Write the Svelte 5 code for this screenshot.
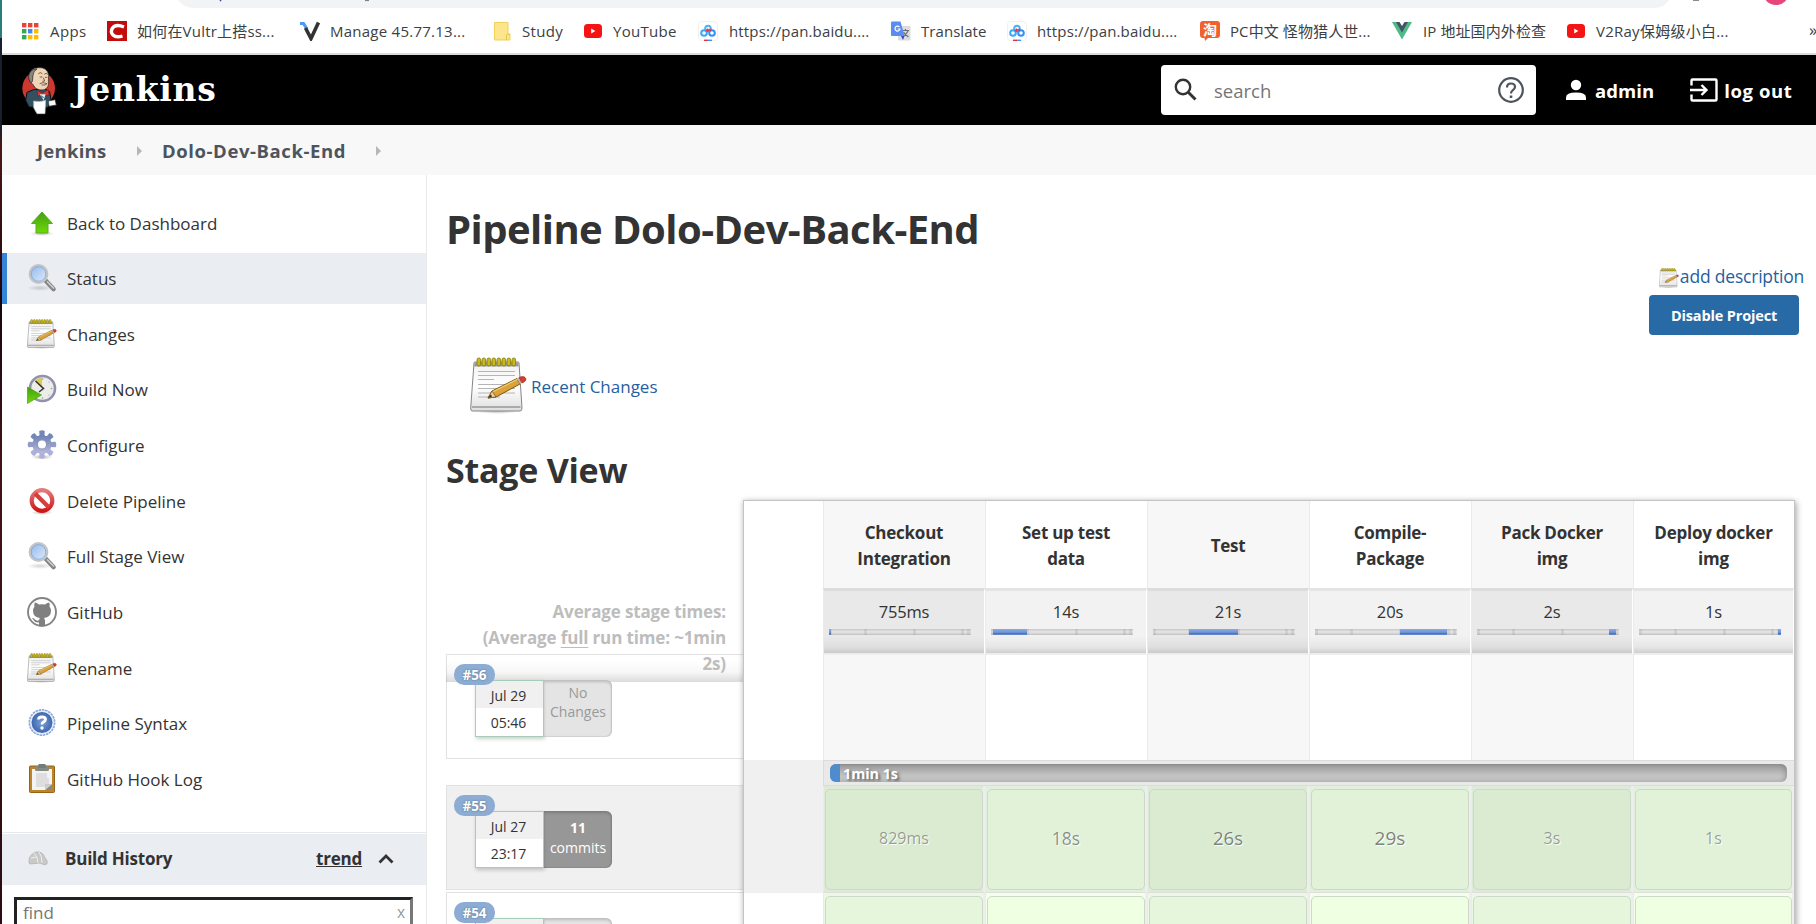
<script>
  const bookmarks = [
    { icon: 'apps', label: 'Apps', x: 20, pad: 50, ls: 0.4 },
    { icon: 'c', label: '如何在Vultr上搭ss...', x: 107, pad: 137, ls: 0.2 },
    { icon: 'v', label: 'Manage 45.77.13...', x: 300, pad: 330, ls: 0.25 },
    { icon: 'note', label: 'Study', x: 492, pad: 522, ls: 0.35 },
    { icon: 'yt', label: 'YouTube', x: 583, pad: 613, ls: 0.3 },
    { icon: 'baidu', label: 'https://pan.baidu....', x: 698, pad: 729, ls: 0.15 },
    { icon: 'tr', label: 'Translate', x: 891, pad: 921, ls: 0.05 },
    { icon: 'baidu', label: 'https://pan.baidu....', x: 1007, pad: 1037, ls: 0.15 },
    { icon: 'tao', label: 'PC中文 怪物猎人世...', x: 1200, pad: 1230, ls: 0.1 },
    { icon: 'vue', label: 'IP 地址国内外检查', x: 1392, pad: 1423, ls: 0.1 },
    { icon: 'yt', label: 'V2Ray保姆级小白...', x: 1566, pad: 1596, ls: 0.25 }
  ].map((b, i, all) => ({ ...b, width: (all[i + 1]?.x ?? 1808) - b.x, gap: b.pad - b.x - 20 }));

  const tasks = [
    ['up', 'Back to Dashboard'],
    ['search', 'Status'],
    ['notepad', 'Changes'],
    ['clock', 'Build Now'],
    ['gear', 'Configure'],
    ['stop', 'Delete Pipeline'],
    ['search', 'Full Stage View'],
    ['github', 'GitHub'],
    ['notepad', 'Rename'],
    ['help', 'Pipeline Syntax'],
    ['clipboard', 'GitHub Hook Log']
  ];

  const stages = [
    { name: ['Checkout', 'Integration'], avg: '755ms', from: 0, to: 2, run: '829ms', size: 16, tone: 0.46 },
    { name: ['Set up test', 'data'], avg: '14s', from: 2, to: 36, run: '18s', size: 17.5, tone: 0.54 },
    { name: ['Test'], avg: '21s', from: 36, to: 85, run: '26s', size: 18.5, tone: 0.6 },
    { name: ['Compile-', 'Package'], avg: '20s', from: 85, to: 132, run: '29s', size: 19, tone: 0.62 },
    { name: ['Pack Docker', 'img'], avg: '2s', from: 132, to: 139, run: '3s', size: 16, tone: 0.46 },
    { name: ['Deploy docker', 'img'], avg: '1s', from: 139, to: 142, run: '1s', size: 16, tone: 0.46 }
  ];

  const runs = [
    { id: '#56', day: 'Jul 29', time: '05:46', lines: ['No', 'Changes'], commits: false, shaded: false },
    { id: '#55', day: 'Jul 27', time: '23:17', lines: ['11', 'commits'], commits: true, shaded: true },
    { id: '#54', day: '', time: '', lines: ['', ''], commits: false, shaded: false }
  ];
</script>

<svg class="defs" width="0" height="0" aria-hidden="true">
  <defs>
    <linearGradient id="paper" x1="0" y1="0" x2="0" y2="1"><stop offset="0" stop-color="#f1f1f1" /><stop offset=".5" stop-color="#fff" /><stop offset="1" stop-color="#dedede" /></linearGradient>
    <linearGradient id="green" x1="0" y1="0" x2="0" y2="1"><stop offset="0" stop-color="#459e12" /><stop offset="1" stop-color="#6dda08" /></linearGradient>
    <linearGradient id="lens" x1="0" y1="0" x2="1" y2="1"><stop offset="0" stop-color="#8fb5e6" /><stop offset="1" stop-color="#e3efff" /></linearGradient>
    <linearGradient id="gear" x1="0" y1="0" x2="0" y2="1"><stop offset="0" stop-color="#6c82b0" /><stop offset="1" stop-color="#b8b8e0" /></linearGradient>
    <linearGradient id="red" x1="0" y1="0" x2="0" y2="1"><stop offset="0" stop-color="#e37b7b" /><stop offset="1" stop-color="#cf1616" /></linearGradient>
    <radialGradient id="blue"><stop offset="0" stop-color="#7fa0d8" /><stop offset="1" stop-color="#3c66b0" /></radialGradient>
    <radialGradient id="shade"><stop offset="0" stop-color="#000" stop-opacity=".28" /><stop offset="1" stop-color="#000" stop-opacity="0" /></radialGradient>
  </defs>
</svg>

{#snippet notepad(size)}
  <svg width={size} height={size} viewBox="0 0 57 57">
    <ellipse cx="27" cy="54" rx="22" ry="3" fill="url(#shade)" />
    <path d="M4 6Q4 5 5 5H48Q49 5 49 6L52 51Q52 54 50 54H2Q.6 54 .7 51Z" fill="url(#paper)" stroke="#858585" stroke-width="1" />
    <path d="M4.500 5.500H48.500V9.500H4Z" fill="#9c9c9c" />
    <path d="M2 50H50.500" stroke="#aaa" stroke-width="2.200" />
    {#each [7, 12, 17, 22, 27, 32, 37, 42] as x}
      <rect x={x} y="1" width="3.600" height="8" rx="1.800" fill="#c9b91d" stroke="#83760c" stroke-width=".8" />
    {/each}
    <path d="M8 14.500H45M8 18.500H45M8 22.500H24M8 27.500H45M8 31.500H45M8 36H45M8 40H30" stroke="#b5b5b5" stroke-width="1.100" />
    <path d="M18 41L22 34 47 21.500 50 27 26 40Z" fill="#dba239" stroke="#7e5716" stroke-width="1" />
    <path d="M22.500 35L48 22" stroke="#f3cc73" stroke-width="1.200" />
    <path d="M18 41L22 34 26 40Z" fill="#e9d3a0" stroke="#7e5716" stroke-width=".8" /><path d="M18 41l3-3.500 1 2z" fill="#222" />
    <path d="M47 21.500L49 20.500 52 26 50 27Z" fill="#b9b9b9" />
    <path d="M49 20.500Q54.500 18 56 22Q56 24.500 52 26Z" fill="#dc3a32" stroke="#a11b15" stroke-width=".6" />
  </svg>
{/snippet}

{#snippet favicon(kind)}
  <svg class="fav" width="20" height="20" viewBox="0 0 20 20">
    {#if kind === 'apps'}
      {#each ['#ea4335', '#ea4335', '#ea4335', '#34a853', '#4285f4', '#fbbc04', '#34a853', '#fbbc04', '#fbbc04'] as c, i}
        <rect x={2 + (i % 3) * 6} y={2 + Math.floor(i / 3) * 6} width="4.400" height="4.400" fill={c} />
      {/each}
    {:else if kind === 'c'}
      <rect width="20" height="20" fill="#c20c0c" />
      <path d="M17 6Q9 2.500 5.500 7Q3 11 6 14Q9 17 15.500 15" fill="none" stroke="#fff" stroke-width="3.400" />
    {:else if kind === 'v'}
      <path d="M0 2.500H3.500L7 8" fill="none" stroke="#4b9bf5" stroke-width="3.200" /><path d="M5.500 7L11 17.500 18.500 1.500" fill="none" stroke="#333" stroke-width="3.600" />
    {:else if kind === 'note'}
      <path d="M2.500 1.500H16V13H18V19H2.500Z" fill="#fde58b" stroke="#efd15c" /><path d="M14.500 19V14Q16 12 18 14" fill="none" stroke="#e9c53e" />
    {:else if kind === 'yt'}
      <rect x="1" y="3" width="18" height="14" rx="3.500" fill="#f61313" /><path d="M8.200 7.500L12.400 10 8.200 12.500Z" fill="#fff" />
    {:else if kind === 'baidu'}
      <rect x=".5" y=".5" width="19" height="19" rx="3" fill="#fff" stroke="#f0f0f0" />
      <g fill="none" stroke-width="2"><circle cx="10" cy="7.500" r="2.800" stroke="#45b5f5" /><circle cx="6" cy="12" r="2.800" stroke="#38a8f8" /><circle cx="14" cy="12" r="2.800" stroke="#2f91f5" /><path d="M10.500 8L8.500 10.500" stroke="#f0354b" stroke-width="2.600" /><path d="M11.500 9.500L13 8" stroke="#f0354b" /></g>
      <path d="M6 19.300H10" stroke="#e62e45" stroke-width="1.400" /><path d="M10 19.300H14" stroke="#3f8df5" stroke-width="1.400" />
    {:else if kind === 'tr'}
      <rect x="7" y="5" width="12.500" height="14.500" rx="1" fill="#dcdcdc" /><path d="M11 9.500H18M14.500 8V9.500M17 10Q15 14 11.500 16M12.500 11Q14 14 17.500 16" stroke="#687078" fill="none" stroke-width="1.200" />
      <path d="M1 0.500H9.500L13.500 15H1Q0 15 0 14V1.500Q0 .5 1 .5Z" fill="#5b8cf0" /><path d="M10 15H13.500L12 19Z" fill="#2b4ebd" />
      <path d="M8.500 6A2.500 2.500 0 1 0 9 8H6.700" stroke="#fff" stroke-width="1.200" fill="none" />
    {:else if kind === 'tao'}
      <path d="M3 0H17Q20 0 20 3V14Q20 17 17 17H8L5 20 4.500 17H3Q0 17 0 14V3Q0 0 3 0Z" fill="#f0622b" />
      <text x="3" y="13.500" font-size="14" fill="#fff" font-weight="700" font-family="Noto Sans CJK SC, sans-serif">淘</text>
    {:else}
      <path d="M0 1H20L10 18.500Z" fill="#4dba87" /><path d="M4 1H16L10 11.500Z" fill="#435466" /><path d="M7.500 1H12.500L10 5Z" fill="#fff" />
    {/if}
  </svg>
{/snippet}

{#snippet taskIcon(kind)}
  {#if kind === 'notepad'}
    {@render notepad(30)}
  {:else}
    <svg width="30" height="30" viewBox="0 0 30 30">
      {#if kind === 'up'}
        <ellipse cx="15" cy="25.500" rx="12" ry="2.500" fill="url(#shade)" />
        <path d="M15 4L25.500 15.500H21V25H9V15.500H4.500Z" fill="url(#green)" stroke="#58ad24" stroke-width="1" />
      {:else if kind === 'search'}
        <ellipse cx="13" cy="25" rx="13" ry="3" fill="url(#shade)" opacity=".6" />
        <path d="M18.500 17.500L26.500 26" stroke="#858585" stroke-width="4.600" stroke-linecap="round" /><path d="M20 18.500L27 25.500" stroke="#d3d3d3" stroke-width="1.400" />
        <circle cx="11.500" cy="11" r="8.800" fill="url(#lens)" stroke="#c4c4c4" stroke-width="2.200" /><circle cx="11.500" cy="11" r="7.300" fill="none" stroke="#7ba4da" stroke-width=".8" />
      {:else if kind === 'clock'}
        <circle cx="15.500" cy="14.500" r="12.500" fill="#ecece8" stroke="#8f91ae" stroke-width="2.600" />
        <path d="M15 14.500L8 7Q11 3.500 15 3.500Z" fill="#d8cb5c" /><path d="M8.500 7L16.500 14.500 12 18" fill="none" stroke="#333" stroke-width="1.500" />
        <g fill="#999"><circle cx="15.500" cy="5" r=".8" /><circle cx="24.500" cy="14.500" r=".8" /><circle cx="15.500" cy="24" r=".8" /><circle cx="22" cy="8" r=".6" /><circle cx="22" cy="21" r=".6" /></g>
        <path d="M.5 13L14.500 21 .5 29.500Z" fill="url(#green)" stroke="#49a016" stroke-width=".7" />
      {:else if kind === 'gear'}
        <ellipse cx="15" cy="27" rx="11" ry="2.500" fill="url(#shade)" />
        {#each [0, 45, 90, 135, 180, 225, 270, 315] as a}
          <path d="M10.500 7L12.500 5 12.200 1Q15 -.6 17.800 1L17.500 5 19.500 7Z" transform="rotate({a} 15 14.500)" fill={a === 0 || a === 45 || a === 315 ? '#7389b5' : a > 100 && a < 260 ? '#adb0d8' : '#929ac6'} />
        {/each}
        <circle cx="15" cy="14.500" r="9.200" fill="url(#gear)" />
        <circle cx="15" cy="14.500" r="5" fill="#8d95bd" /><circle cx="15" cy="14.500" r="4" fill="#fff" />
      {:else if kind === 'stop'}
        <ellipse cx="15" cy="26.500" rx="11" ry="2.500" fill="url(#shade)" />
        <circle cx="15" cy="14.500" r="10.300" fill="#fff" stroke="url(#red)" stroke-width="4.200" /><path d="M8 7.500L22 21.500" stroke="#d83d3d" stroke-width="4.200" />
      {:else if kind === 'github'}
        <circle cx="15" cy="15" r="14" fill="#fff" stroke="#848484" stroke-width="1.900" />
        <path d="M12 29V25.500Q8 26 6.500 23Q6 22 4.800 21Q7 20.500 8 22.500Q10 24.500 12.200 23Q12.200 21.500 13 21Q6 20 6 14Q6 11.500 7.500 9.500Q7 7.500 7.800 5.500Q9.500 5.500 12 7.500Q15 6.800 18 7.500Q20.500 5.500 22.200 5.500Q23 7.500 22.500 9.500Q24 11.500 24 14Q24 20 17 21Q18 22 18 24V29Z" fill="#808080" />
      {:else if kind === 'help'}
        <circle cx="15" cy="14.500" r="12.700" fill="#e6edf8" stroke="#8ca8d4" stroke-width="1.600" stroke-dasharray="2.500 .8" /><circle cx="15" cy="14.500" r="10.500" fill="url(#blue)" />
        <path d="M11.500 11.500Q11.500 9 15 9Q18.500 9 18.500 11.300Q18.500 13 16.500 14Q15 14.800 15 16.500" fill="none" stroke="#fff" stroke-width="2.800" /><circle cx="15" cy="20" r="1.700" fill="#fff" />
      {:else}
        <rect x="2.500" y="2" width="25" height="26.500" rx="1" fill="#bd8528" stroke="#93631a" />
        <path d="M5 5H25V26H5Z" fill="#f3f3f3" /><path d="M9 9H20V14H22V23H9Z" fill="#dedede" /><path d="M25 20V26H18Z" fill="#888" /><path d="M18 26V20H25Z" fill="#ccc" />
        <rect x="8" y="2" width="14" height="5" rx="1.500" fill="#858a82" /><rect x="11" y="0" width="8" height="4" rx="1.500" fill="#777b75" />
      {/if}
    </svg>
  {/if}
{/snippet}

<div class="page">
  <div class="edge"></div>
  <div class="window">
    <svg class="toolbar" width="1814" height="9" viewBox="2 0 1814 9">
      <path d="M178 0Q184 8 194 8H1654Q1664 8 1669 0Z" fill="#f1f3f4" />
      <path d="M220.500 0V1.200" stroke="#2b3f9a" stroke-width="1.500" /><path d="M365 .6H369" stroke="#777" stroke-width="1" /><path d="M1693 .5H1699" stroke="#888" stroke-width="1" />
      <circle cx="1776" cy="-8" r="13" fill="#e8447e" />
    </svg>
    <nav class="bookmarks">
      {#each bookmarks as b}
        <span class="bookmark" style:width="{b.width}px">{@render favicon(b.icon)}<span style:margin-left="{b.gap}px" style:letter-spacing="{b.ls}px">{b.label}</span></span>
      {/each}
      <span class="more">»</span>
    </nav>

    <header>
      <svg width="37" height="49" viewBox="24 17 111 147">
        <ellipse cx="77" cy="84" rx="49" ry="51" fill="#cc3830" />
        <path d="M42 96L62 88 96 86 110 94 114 120 104 142 48 140 38 120Z" fill="#335061" stroke="#0b1115" stroke-width="3" />
        <path d="M49 48Q50 22 76 22Q102 20 107 44L106 66Q108 82 94 88Q80 92 68 84L58 70Q46 66 49 48Z" fill="#f0d6b7" stroke="#231f20" stroke-width="2" />
        <path d="M50 62Q42 46 54 32Q62 24 72 26Q60 32 60 46L58 64Q54 70 50 62Z" fill="#8b8682" stroke="#231f20" stroke-width="2" />
        <path d="M76 40Q82 34 88 40M94 42Q100 36 104 42M80 50H88M96 51H103M91 52L95 62 88 63M80 70Q90 64 102 70L96 74H86" fill="none" stroke="#5d463b" stroke-width="2.500" />
        <path d="M72 90L88 98 106 88 108 106 90 102 74 108Z" fill="#d33833" stroke="#7a1714" stroke-width="2" />
        <path d="M80 102L98 102 92 120Z" fill="#eee" /><path d="M84 106l8 6" stroke="#2c86a8" stroke-width="4" />
        <path d="M62 122Q80 126 98 120L96 160 72 160 62 142Z" fill="#fff" stroke="#bbb" stroke-width="2" />
        <path d="M106 122L126 118 130 134 108 138Z" fill="#f6f6f6" stroke="#333" stroke-width="2" />
      </svg>
      <span class="brand">Jenkins</span>
      <div class="searchbox">
        <svg width="26" height="26" viewBox="0 0 26 26" fill="none" stroke="#333"><circle cx="10" cy="10" r="7.200" stroke-width="2.400" /><path d="M15.500 15.500L22.500 22.500" stroke-width="3" /></svg>
        <span>search</span>
        <svg width="28" height="28" viewBox="0 0 28 28" fill="none" stroke="#4d545d" stroke-width="2.200"><circle cx="14" cy="14" r="11.800" /><path d="M10 11.500Q10 7.500 14 7.500Q18 7.500 18 11Q18 13 15.500 14.500Q14 15.700 14 17.500" /><path d="M14 19.500V22" stroke-width="2.600" /></svg>
      </div>
      <svg class="user" width="22" height="22" viewBox="0 0 22 22" fill="#fff"><circle cx="11" cy="6" r="5.200" /><path d="M1 21V18.500Q1 13.500 11 13.500T21 18.500V21Z" /></svg>
      <b>admin</b>
      <svg class="out" width="28" height="24" viewBox="0 0 28 24" fill="none" stroke="#fff" stroke-width="2.400"><path d="M1.500 7.500V2.500Q1.500 1.500 2.500 1.500H25.500Q26.500 1.500 26.500 2.500V21.500Q26.500 22.500 25.500 22.500H2.500Q1.500 22.500 1.500 21.500V16.500M0 12H16M11.500 7L16.500 12 11.500 17" /></svg>
      <b class="logout">log out</b>
    </header>

    <div class="crumbs">
      <b class="c1">Jenkins</b><i></i><b class="c2">Dolo-Dev-Back-End</b><i></i>
    </div>

    <div class="body">
      <aside>
        <div class="tasks">
          {#each tasks as [icon, label]}
            <div class="task" class:active={label === 'Status'}>{@render taskIcon(icon)}<span>{label}</span></div>
          {/each}
        </div>
        <div class="history">
          <svg width="20" height="15" viewBox="0 0 20 15"><path d="M1 12Q0 4 8 1Q15 0 17 7Q20 9 19 13Q16 15 12 12L2 13Z" fill="#c9c9c7" stroke="#b3b3b1" stroke-width=".8" /><path d="M6 2Q10 6 10 12M11 1Q14 5 14 12M3 7L9 6" fill="none" stroke="#eee" /></svg>
          <b>Build History</b>
          <a href="#trend">trend</a>
          <svg width="16" height="10" viewBox="0 0 16 10" fill="none" stroke="#333" stroke-width="2.800"><path d="M1.500 8.500L8 2 14.500 8.500" /></svg>
        </div>
        <div class="find"><span>find</span><small>x</small></div>
      </aside>

      <main>
        <h1>Pipeline Dolo-Dev-Back-End</h1>
        <div class="actions">
          <span class="add">{@render notepad(20)}<span>add description</span></span>
          <button>Disable Project</button>
        </div>
        <div class="recent">{@render notepad(57)}<span>Recent Changes</span></div>
        <h2>Stage View</h2>
        <div class="stageview">
          <div class="runs">
            <div class="averages"><p>Average stage times:<br />(Average <u>full</u> run time: ~1min 2s)</p></div>
            {#each runs as r}
              <div class="run" class:shaded={r.shaded}>
                <span class="badge">{r.id}</span>
                <div class="stamp"><span>{r.day}</span><span>{r.time}</span></div>
                <div class="changes" class:commits={r.commits}><span>{r.lines[0]}</span><span>{r.lines[1]}</span></div>
              </div>
            {/each}
          </div>
          <div class="table">
            <div class="row head"><span class="lead"></span>{#each stages as s}<span class="cell"><span>{#each s.name as line, i}{#if i}<br />{/if}{line}{/each}</span></span>{/each}</div>
            <div class="row avg"><span class="lead"></span>
              {#each stages as s}
                <span class="cell"><span>{s.avg}</span>
                  <span class="track">
                    {#each [0, 35, 84, 132, 138] as t}<i style:left="{t}px"></i>{/each}
                    <em style:left="{s.from}px" style:width="{s.to - s.from}px"></em>
                  </span>
                </span>
              {/each}
            </div>
            <div class="row blank"><span class="lead"></span>{#each stages as s}<span class="cell"></span>{/each}</div>
            <div class="progress"><span class="lead"></span><div class="barcell"><div class="bar"><i></i><b>1min 1s</b></div></div></div>
            <div class="row done dim"><span class="lead"></span>{#each stages as s}<span class="cell"><span class="pill" style:font-size="{s.size}px" style:color="rgba(51,51,51,{s.tone})">{s.run}</span></span>{/each}</div>
            <div class="row done"><span class="lead"></span>{#each stages as s}<span class="cell"><span class="pill"></span></span>{/each}</div>
          </div>
        </div>
      </main>
    </div>
  </div>
</div>

<style>
  :global(body) { margin: 0; overflow: hidden; background: #fff; }
  :global(*) { box-sizing: border-box; }
  svg { display: block; flex: none; }
  .defs { position: absolute; }
  .page { width: 1816px; height: 924px; display: flex; overflow: hidden; font: 17px "Open Sans", "Noto Sans CJK SC", sans-serif; color: #333; }
  .edge { width: 2px; flex: none; background: linear-gradient(#2c7d77 38px, #17202e 38px 125px, #4a1714 150px, #2e0a10 260px, #16060c 300px, #42121a 460px, #2c0c12); }
  .window { width: 1814px; height: 924px; overflow: hidden; }
  .bookmarks { height: 46px; padding-left: 18px; display: flex; align-items: center; border-bottom: 2px solid #dadce0; font-size: 15px; color: #3c4043; white-space: nowrap; }
  .bookmark { display: flex; align-items: center; flex: none; line-height: 20px; }
  .bookmark > span { margin-top: -1px; }
  .more { font-size: 17px; margin: -4px 0 0 1px; }

  header { height: 70px; background: #000; color: #fff; display: flex; align-items: center; padding-left: 19px; }
  .brand { font: bold 33px "DejaVu Serif", serif; letter-spacing: .7px; margin-left: 15px; width: 1088px; padding-bottom: 2px; }
  .searchbox { width: 375px; height: 50px; border-radius: 4px; background: #fff; color: #757575; display: flex; align-items: center; padding: 0 11px 0 12px; font-size: 18.5px; flex: none; }
  .searchbox span { flex: 1; margin-left: 15px; }
  .user { margin: 0 8px 0 29px; }
  .out { margin: 0 6px 0 36px; }
  header b { font-size: 18.5px; letter-spacing: .1px; }
  header .logout { letter-spacing: .55px; white-space: nowrap; }

  .crumbs { height: 50px; background: #f8f8f8; color: #4d545d; display: flex; align-items: center; padding-left: 35px; font-size: 18.5px; padding-top: 1px; }
  .crumbs .c1 { width: 100px; letter-spacing: .25px; }
  .crumbs .c2 { width: 214px; white-space: nowrap; letter-spacing: .58px; }
  .crumbs i { border: 5px solid transparent; border-left-color: #b5b8bb; border-right: 0; margin-right: 20px; }

  .body { display: flex; height: 749px; }
  aside { width: 425px; flex: none; border-right: 1px solid #eaeaea; }
  .tasks { height: 658px; padding-top: 22px; border-bottom: 1px solid #e6eaed; }
  .task { height: 51px; margin-bottom: 4.650px; display: flex; align-items: center; padding-left: 25px; font-weight: 500; }
  .task span { margin: 1px 0 0 10px; }
  .active { background: #eaeef2; border-left: 5px solid #3584d8; padding-left: 20px; }
  .history { margin-top: 1px; height: 51px; background: #eaeef2; display: flex; align-items: center; padding: 0 0 2px 26px; }
  .history b { margin-left: 17px; width: 251px; letter-spacing: -.22px; }
  .history a { color: #333; font-weight: 700; width: 62px; letter-spacing: -.2px; }
  .find { margin: 12px 13px 0 12px; height: 50px; border: 3px solid #222; border-right-color: #777; display: flex; justify-content: space-between; padding: 1px 5px 0 6px; color: #757575; }
  .find small { font-size: 15.500px; color: #999; line-height: 22px; }

  main { flex: 1; padding: 28px 0 0 19px; }
  h1 { margin: 0; font-size: 40px; line-height: 52px; height: 58px; letter-spacing: -.55px; white-space: nowrap; }
  .actions { height: 95px; display: flex; flex-direction: column; align-items: flex-end; color: #265f9f; font-size: 17.500px; letter-spacing: -.2px; padding-right: 12px; }
  .add { display: flex; align-items: center; height: 34px; }
  .add svg { margin: 0 1px 0 0; }
  .add span { margin-top: -5px; }
  button { width: 150px; height: 40px; margin-right: 5px; background: #276aa5; border: 0; border-radius: 4px; color: #fff; font: bold 14.500px "Open Sans", sans-serif; letter-spacing: -.15px; padding: 0; }
  .recent { display: flex; align-items: center; margin-left: 24px; color: #265f9f; height: 59px; }
  .recent span { margin: 2px 0 0 4px; }
  h2 { margin: 32px 0 0; font-size: 34px; line-height: 46px; height: 53px; letter-spacing: -.25px; }
  .stageview { display: flex; }
  .runs { width: 298px; flex: none; }
  .averages { height: 182px; margin-bottom: -28px; position: relative; z-index: 2; padding: 99px 18px 0 0; background: linear-gradient(transparent 160px, rgba(0, 0, 0, .03) 172px, rgba(0, 0, 0, .14)); }
  .averages p { margin: 0 0 0 10px; font-weight: 700; line-height: 26px; text-align: right; color: #bdbdbd; letter-spacing: -.14px; }
  .averages u { text-decoration-thickness: 1px; text-underline-offset: 3px; }
  .run { height: 105px; margin-bottom: 26px; border: 1px solid #e2e2e2; position: relative; display: flex; padding: 25px 0 0 28px; font-size: 14px; }
  .run.shaded { background: #f0f0f0; margin-bottom: 2px; }
  .badge { position: absolute; z-index: 4; left: 7px; top: 9px; width: 41px; height: 21px; border-radius: 10px; background: #8cacd3; color: #fff; font-weight: 700; font-size: 13.500px; line-height: 22px; text-align: center; text-shadow: 0 0 2px #567; }
  .stamp { width: 69px; height: 57px; border: 1px solid #a9cbb9; background: linear-gradient(#f0f0f0 27px, #fff 27px); box-shadow: 1px 2px 4px rgba(0, 0, 0, .2); display: flex; flex-direction: column; text-align: center; line-height: 27px; padding: 1px 2px 0 0; position: relative; z-index: 3; }
  .changes { width: 68px; height: 57px; border-radius: 0 6px 6px 0; background: #e4e4e4; color: #999; box-shadow: inset 0 2px 3px rgba(0, 0, 0, .18), inset -1px -1px 1px rgba(0, 0, 0, .08); display: flex; flex-direction: column; text-align: center; line-height: 19px; padding-top: 3px; position: relative; z-index: 3; }
  .commits { background: #979797; color: #fff; padding-top: 7px; line-height: 20px; }
  .commits span:first-child { font-weight: 700; }
  .table { width: 1052px; height: 440px; border: 1px solid #c4c4c4; box-shadow: 2px 2px 6px rgba(0, 0, 0, .28), -1px 0 5px rgba(0, 0, 0, .12); background: #fff; position: relative; z-index: 5; overflow: hidden; margin-left: -1px; }
  .row { display: grid; grid-template-columns: 79px repeat(5, 162px) 161px; }
  .cell { border-left: 1px solid #ebebeb; display: flex; align-items: center; justify-content: center; text-align: center; }
  .cell:nth-child(even) { background: #f7f7f7; }
  .head { height: 87px; font-weight: 700; line-height: 26px; letter-spacing: -.25px; }
  .head .cell { padding: 2px 1px 0 0; }
  .avg { height: 67px; font-size: 16.500px; letter-spacing: -.15px; }
  .avg .cell { flex-direction: column; justify-content: flex-start; align-items: stretch; border-top: 3px solid #e4e4e4; border-bottom: 2px solid #ededed; border-right: 1px solid #fff; background: linear-gradient(#f2f2f2 45px, #e6e6e6 56px, #cfcfcf 62px, #fff 62px); line-height: 26px; padding-top: 8px; }
  .avg .cell:nth-child(even) { border-top-color: #dcdcdc; background: linear-gradient(#e9e9e9 45px, #dfdfdf 56px, #c9c9c9 62px, #fff 62px); }
  .track { position: relative; width: 142px; height: 6px; margin: 4px 0 0 5px; background: linear-gradient(#c6c6c6, #e2e2e2 40%, #dedede 65%, #bfbfbf); }
  .track i { position: absolute; top: 0; width: 3px; height: 6px; background: rgba(120, 120, 120, .15); }
  .track em { position: absolute; top: 0; height: 6px; background: linear-gradient(#8babdf, #7196d6 55%, #4a74c8 75%, #6b8fd2); }
  .blank { height: 105px; }
  .progress { display: flex; height: 26px; }
  .progress .lead, .dim .lead { background: #f0f0f0; }
  .progress .lead { width: 79px; }
  .barcell { flex: 1; background: #e9e9e9; border: 1px solid #dcdcdc; border-right: 0; padding: 3px 7px 0 6px; }
  .bar { height: 18px; border-radius: 6px; overflow: hidden; background: linear-gradient(#999, #b0b0b0 35%, #c4c4c4 65%, #c6c6c6); box-shadow: inset -2px 0 5px rgba(90, 90, 90, .35); display: flex; align-items: center; }
  .bar i { width: 10px; height: 18px; background: #4f8bcd; margin-right: 3px; }
  .bar b { color: #fff; font-size: 14.300px; text-shadow: 2px 2px 3px #555; line-height: 18px; padding-top: 1px; }
  .done { height: 107px; }
  .done .cell { background: #f3ffe8; border-bottom: 1px solid #dedede; border-right: 2px solid #eee; padding: 3px 0 2px 1px; align-items: stretch; }
  .done .cell:nth-child(even) { background: #edf7e5; }
  .done .pill { flex: 1; border: 1px solid #ccd8c8; border-radius: 5px; background: #eeffe2; display: flex; align-items: center; justify-content: center; padding-bottom: 4px; }
  .done .cell:nth-child(even) .pill { background: #e6f6dc; }
  .dim .cell { background: #e3efdd; }
  .dim .cell:nth-child(even) { background: #deead8; }
  .dim .pill { background: #e2f2d9; text-shadow: 1px 1px 1px #fff; }
  .dim .cell:nth-child(even) .pill { background: #daebd1; }
</style>
